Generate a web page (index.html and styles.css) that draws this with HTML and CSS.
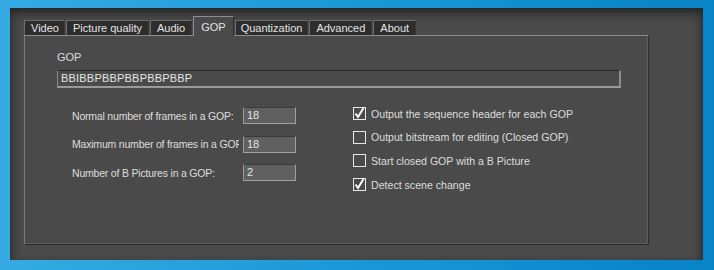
FILE: index.html
```html
<!DOCTYPE html>
<html lang="en">
<head>
    <meta charset="UTF-8">
    <title>Encoder settings - GOP</title>
    <link rel="stylesheet" href="styles.css">
</head>
<body>
    <div class="window">
        <div class="tabs">
            <div class="tab">Video</div>
            <div class="tab">Picture quality</div>
            <div class="tab">Audio</div>
            <div class="tab active">GOP</div>
            <div class="tab narrow">Quantization</div>
            <div class="tab">Advanced</div>
            <div class="tab">About</div>
        </div>
        <div class="panel">
            <div class="group-label">GOP</div>
            <div class="edit wide">BBIBBPBBPBBPBBPBBP</div>

            <div class="columns">
                <div class="left-col">
                    <div class="field">
                        <span class="field-label">Normal number of frames in a GOP:</span>
                        <span class="edit small">18</span>
                    </div>
                    <div class="field">
                        <span class="field-label">Maximum number of frames in a GOP:</span>
                        <span class="edit small">18</span>
                    </div>
                    <div class="field">
                        <span class="field-label">Number of B Pictures in a GOP:</span>
                        <span class="edit small">2</span>
                    </div>
                </div>
                <div class="right-col">
                    <div class="check">
                        <span class="box"><svg viewBox="0 0 13 13" width="13" height="13"><polyline points="2.5,6.5 5,10 10.5,1" /></svg></span>
                        Output the sequence header for each GOP
                    </div>
                    <div class="check">
                        <span class="box"></span>
                        Output bitstream for editing (Closed GOP)
                    </div>
                    <div class="check">
                        <span class="box"></span>
                        Start closed GOP with a B Picture
                    </div>
                    <div class="check">
                        <span class="box"><svg viewBox="0 0 13 13" width="13" height="13"><polyline points="2.5,6.5 5,10 10.5,1" /></svg></span>
                        Detect scene change
                    </div>
                </div>
            </div>
        </div>
    </div>
</body>
</html>
```

FILE: styles.css
```css
body {
    margin: 0;
    padding: 8px 0 0 10px;
    height: 270px;
    box-sizing: border-box;
    overflow: hidden;
    background: linear-gradient(to right, #36abe3, #1a98d6 50%, #0783c6);
    font-family: "Liberation Sans", Arial, sans-serif;
    font-size: 11px;
    color: #dedede;
}
.window {
    width: 693px;
    height: 252px;
    box-sizing: border-box;
    background-color: #4a4a4a;
    border-top: 1px solid #1f2a30;
    box-shadow: inset 0 10px 10px -6px #262626, inset 8px 0 8px -6px #2e2e2e, inset -8px 0 8px -6px #2e2e2e;
    padding: 6px 0 0 14px;
}
.tabs {
    display: flex;
    align-items: flex-end;
    height: 20px;
    position: relative;
    z-index: 1;
}
.tab {
    height: 15px;
    box-sizing: border-box;
    background-color: #2d2d2d;
    border-top: 1px solid #6e6e6e;
    border-left: 1px solid #6e6e6e;
    border-right: 1px solid #3a3a3a;
    padding: 1px 6px 0 6px;
    margin-right: 1px;
    line-height: 13px;
    color: #e4e4e4;
}
.tab:first-child {
    padding-left: 6px;
    padding-right: 5px;
}
.tab.narrow {
    padding: 1px 5px 0 5px;
}
.tab.active {
    height: 20px;
    background-color: #4a4a4a;
    border-top: 1px solid #8c8c8c;
    border-left: 1px solid #8c8c8c;
    border-right: 1px solid #2a2a2a;
    padding: 4px 7px 0 7px;
    margin-bottom: -1px;
}
.panel {
    width: 625px;
    height: 210px;
    box-sizing: border-box;
    border-top: 1px solid #8c8c8c;
    border-left: 1px solid #7a7a7a;
    border-right: 1px solid #2a2a2a;
    border-bottom: 1px solid #2a2a2a;
    box-shadow: inset -1px -1px 0 #5c5c5c;
    padding: 15px 0 0 32px;
}
.group-label {
    height: 13px;
    line-height: 13px;
}
.edit {
    box-sizing: border-box;
    border-top: 1px solid #2a2a2a;
    border-left: 1px solid #8a8a8a;
    border-right: 2px solid #8e8e8e;
    border-bottom: 2px solid #9a9a9a;
    color: #e6e6e6;
}
.edit.wide {
    width: 564px;
    height: 18px;
    margin-top: 6px;
    padding-left: 3px;
    line-height: 15px;
    font-size: 11px;
    letter-spacing: 0.2px;
    background-color: #4a4a4a;
}
.columns {
    display: flex;
    margin-top: 19px;
}
.left-col {
    width: 296px;
    padding-left: 15px;
    box-sizing: border-box;
}
.field {
    display: flex;
    align-items: center;
    height: 17px;
    margin-bottom: 11.5px;
    font-size: 10.5px;
    letter-spacing: -0.2px;
}
.field-label {
    width: 167px;
    margin-right: 4px;
    white-space: nowrap;
    overflow: hidden;
}
.edit.small {
    width: 53px;
    height: 17px;
    padding-left: 3px;
    line-height: 14px;
    font-size: 11px;
    letter-spacing: 0;
    background-color: #606060;
    border-top: 1px solid #3a3a3a;
    border-left: 1px solid #9a9a9a;
    border-right: 1px solid #a0a0a0;
    border-bottom: 1px solid #a0a0a0;
}
.check {
    display: flex;
    align-items: center;
    height: 13px;
    margin-bottom: 10.7px;
    font-size: 10.6px;
    white-space: nowrap;
}
.box {
    width: 13px;
    height: 13px;
    box-sizing: border-box;
    border: 1px solid #e8e8e8;
    margin-right: 5px;
    position: relative;
}
.box svg {
    position: absolute;
    left: -1px;
    top: -1px;
}
.box polyline {
    fill: none;
    stroke: #ffffff;
    stroke-width: 2;
}
```
